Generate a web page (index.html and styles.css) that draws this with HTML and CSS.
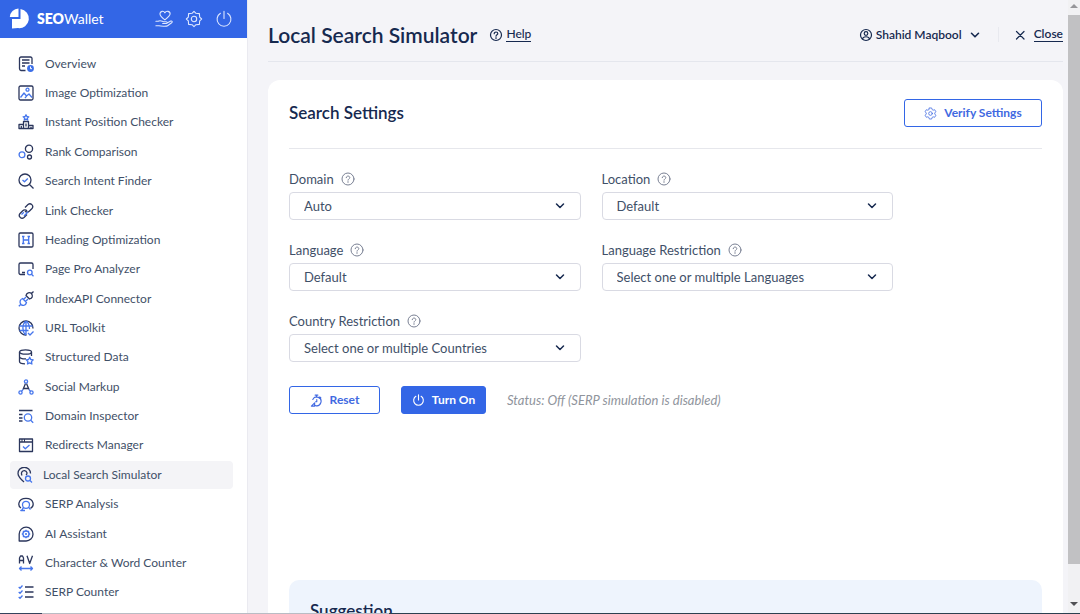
FILE: index.html
```html
<!DOCTYPE html>
<html lang="en">
<head>
<meta charset="utf-8">
<meta name="viewport" content="width=device-width, initial-scale=1">
<title>SEOWallet - Local Search Simulator</title>
<link rel="stylesheet" href="styles.css">
</head>
<body>
<div class="app">
  <aside class="sidebar">
    <header class="brand-bar">
      <a class="brand" href="#">
        <svg class="brand-logo" viewBox="0 0 22 22"><path fill="#fff" d="M9.500 0.500V9H0.800A9 9 0 0 1 9.500 0.500Z"/><path fill="#fff" d="M11.500 1A9.600 9.600 0 1 1 9 20.100L3 20.500V11H11.500Z"/></svg>
        <span class="brand-name"><b>SEO</b>Wallet</span>
      </a>
      <div class="brand-actions">
        <button class="bar-button" type="button" aria-label="Donate"><svg viewBox="0 0 20 20" class="line"><path d="M11 11C8 8.800 5.500 6.700 5.500 4.300 5.500 1 9.800.500 11 3.200 12.200.500 16.800 1 16.800 4.300 16.800 6.700 14 8.800 11 11Z"/><path d="M1 12.500H3.500C6 10.800 8 12.700 9.500 13H12.500C14 13.200 13.800 15 12.500 15H8.500M13.500 14.500 17.500 12.300C19 11.800 19.700 13.200 18.500 14.200L14 17.500C13 18.300 6 18 4.500 17.500H1"/></svg></button>
        <button class="bar-button" type="button" aria-label="Settings"><svg viewBox="0 0 20 20" class="line"><path d="m10 1.500 2.200 2.200 3.800.3.300 3.800L18.500 10l-2.200 2.200-.3 3.800-3.800.3L10 18.500l-2.200-2.200-3.800-.3-.3-3.800L1.500 10l2.200-2.200L4 4l3.800-.3Z"/><circle cx="10" cy="10" r="3"/></svg></button>
        <button class="bar-button" type="button" aria-label="Power"><svg viewBox="0 0 20 20" class="line"><path d="M10 1.500v8M6 3.700a7.700 7.700 0 1 0 8 0"/></svg></button>
      </div>
    </header>
    <nav class="menu" aria-label="Tools">
      <a class="menu-item" href="#"><svg viewBox="0 0 16 16"><path d="M7.500 14.500H3a2 2 0 0 1-1.500-2V2.500A1.500 1.500 0 0 1 3 1h9.500A1.500 1.500 0 0 1 14 2.500V8M4 4h7.500M4 7h7.500M4 10h3"/><circle class="solid" cx="12.500" cy="12.500" r="3.400"/><path class="knock" d="M12.500 10.500v2.200H14"/></svg>Overview</a>
      <a class="menu-item" href="#"><svg viewBox="0 0 16 16"><rect x="1" y="1" width="14" height="14" rx="1.500"/><g class="accent"><circle cx="9.500" cy="4.700" r="1.500"/><path d="M2.500 12.500 6 8l2.500 3L11 9l3 3.500M7 13l1.500-2"/></g></svg>Image Optimization</a>
      <a class="menu-item" href="#"><svg viewBox="0 0 16 16"><path d="M5.500 14.500V7.500h5v7M5.500 10.500H1v4h14v-3h-4.500M8 9.500v3M3.300 12v2M13 13v1"/><path class="accent" d="m8 .8.900 1.700 1.900.3-1.400 1.300.3 1.900L8 5.100 6.300 6l.3-1.900-1.400-1.300 1.900-.3Z"/></svg>Instant Position Checker</a>
      <a class="menu-item" href="#"><svg viewBox="0 0 16 16"><circle cx="11" cy="4.800" r="3.600"/><circle cx="11.500" cy="13" r="2"/><circle class="accent" cx="4" cy="10.800" r="2.900"/></svg>Rank Comparison</a>
      <a class="menu-item" href="#"><svg viewBox="0 0 16 16"><circle cx="7" cy="7" r="6"/><path d="m11.500 11.500 4 4"/><path class="accent" d="m4.500 7 2 1.800L9.800 5.500"/></svg>Search Intent Finder</a>
      <a class="menu-item" href="#"><svg viewBox="0 0 16 16"><path d="m7 4.500 3-3c2.700-2.200 6.200 1.300 4 4L11.500 8C10 9.500 8 9.300 7 8"/><path d="m9 11.500-3 3c-2.700 2.200-6.200-1.300-4-4L4.500 8C6 6.500 8 6.700 9 8"/><path class="accent" d="m3.500 11.500 2.300-2.300M6 13l4-4"/></svg>Link Checker</a>
      <a class="menu-item" href="#"><svg viewBox="0 0 16 16"><rect x="1" y="1" width="14" height="14" rx="1.200"/><path class="accent" d="M4 4.500h2.500M4 11.500h2.500M9.500 4.500H12M9.500 11.500H12M5.300 4.500v7M10.700 4.500v7M5.300 8h5.400"/></svg>Heading Optimization</a>
      <a class="menu-item" href="#"><svg viewBox="0 0 16 16"><path d="M7 13.500H2.500A1.500 1.500 0 0 1 1 12V3.500A1.500 1.500 0 0 1 2.500 2h11A1.500 1.500 0 0 1 15 3.500V8M4 11.500h3"/><g class="accent"><circle cx="11.800" cy="11.500" r="2.300"/><path d="m13.500 13.200 2 2"/></g></svg>Page Pro Analyzer</a>
      <a class="menu-item" href="#"><svg viewBox="0 0 16 16"><path d="M8 4.500 11.500 8c2.800-.8 3.800-3 2-5.400C11.500.800 8.800 1.700 8 4.500ZM13.500 2.500l2-2"/><path class="accent" d="M4.500 7.500 8.500 11.500C7.700 14.500 5 15.200 3 13.400 1.200 11.300 2 8.500 4.500 7.500ZM2.700 13.500.8 15.300M5.500 8.500 8 6M7.500 10.500 10 8"/></svg>IndexAPI Connector</a>
      <a class="menu-item" href="#"><svg viewBox="0 0 16 16"><path d="M8.500 15A7 7 0 1 1 15 8.500"/><g class="accent"><path d="M1.500 6h13M1.500 10.500h9M8 1v14M7.500 1C4 5 4 11 7.500 15M8.500 1c2.500 2.500 3 5 3 8M10 13l2 2 3.500-3.500"/></g></svg>URL Toolkit</a>
      <a class="menu-item" href="#"><svg viewBox="0 0 16 16"><ellipse cx="7.500" cy="3" rx="6" ry="2.200"/><path d="M1.500 3v9.500c0 1.500 2.500 2.300 5.500 2.300M13.500 3v4M1.500 7.500c0 1.500 2.500 2.500 6.500 2.300"/><path class="accent" d="m11.700 8.300 1.100 2.200 2.400.4-1.700 1.700.4 2.400-2.200-1.100-2.200 1.100.4-2.400-1.700-1.700 2.400-.4Z"/></svg>Structured Data</a>
      <a class="menu-item" href="#"><svg viewBox="0 0 16 16"><path d="M7.500 4.500 5 10.500M8.500 4.500l2.500 6M5.500 9.500h5"/><g class="accent"><circle cx="8" cy="2.500" r="1.600"/><circle cx="2.500" cy="13.500" r="1.600"/><circle cx="13.500" cy="13.500" r="1.600"/><path d="m3.500 12.300 1.500-1.800M12.500 12.300 11 10.500"/></g></svg>Social Markup</a>
      <a class="menu-item" href="#"><svg viewBox="0 0 16 16"><path d="M1 2.500h13.500M1 6.500h3.500M1 10h3.500M1 13h3.500"/><g class="accent"><circle cx="10" cy="9.500" r="3.700"/><path d="m12.700 12.200 2.500 2.500"/></g></svg>Domain Inspector</a>
      <a class="menu-item" href="#"><svg viewBox="0 0 16 16"><path d="M1.500 2h13v12.500h-13ZM1.500 5h13M3.500 3.500h1M6 3.500h1"/><path class="accent" d="m5 9.500 2.300 2.300L11.500 8"/></svg>Redirects Manager</a>
      <a class="menu-item menu-item-active" href="#" aria-current="page"><svg viewBox="0 0 16 16"><path d="M7 15C3 11.500 1 9.500 1 6.500a6.200 6.200 0 0 1 12.500 0M5 8.500C3.500 5.500 5.500 3.500 7.500 3.700c2.500.3 3.200 2.800 1.500 4.300"/><g class="accent"><circle cx="11" cy="11.500" r="2.500"/><path d="m13 13.500 2 2"/></g></svg>Local Search Simulator</a>
      <a class="menu-item" href="#"><svg viewBox="0 0 16 16"><path d="M3 12C1.200 11 .6 8.500 1 6.800 2.500.800 13.500.800 15 6.800c.5 2.300-.3 4.500-2.500 5.500"/><g class="accent"><circle cx="8" cy="8.800" r="3.500"/><path d="m10.500 11.300 2 2.200M5.500 11.300C5 13 4 14 2.800 14.500H7"/></g></svg>SERP Analysis</a>
      <a class="menu-item" href="#"><svg viewBox="0 0 16 16"><path d="M1.200 15V8A6.900 6.900 0 1 1 8 15Z"/><g class="accent"><circle cx="8" cy="8" r="3"/><path d="M8 3.800v1.200M8 11v1.200M3.800 8H5M11 8h1.200M5 5l.9.900M10.100 10.100l.9.900M11 5l-.9.900M5.900 10.100 5 11"/></g><circle class="solid" cx="8" cy="8" r="1"/></svg>AI Assistant</a>
      <a class="menu-item" href="#"><svg viewBox="0 0 16 16"><path d="M1.500 8.500V3l1-2h2l1 2v5.500M1.500 5.500h4M9 .8l2.700 7.700L14.500.8"/><path class="accent" d="M1.500 13.500h13M3.500 11.500l-2 2 2 2M12.500 11.500l2 2-2 2"/></svg>Character &amp; Word Counter</a>
      <a class="menu-item" href="#"><svg viewBox="0 0 16 16"><path d="M7 3h8.500M7 8h8.500M7 13h8.500"/><path class="accent" d="m.7 3 1.300 1.200L4.500 1.500M.7 8 2 9.200 4.500 6.500M.7 13 2 14.200 4.500 11.500"/></svg>SERP Counter</a>
    </nav>
  </aside>

  <main class="content">
    <header class="page-header">
      <h1 class="page-title">Local Search Simulator</h1>
      <a class="help-link" href="#"><svg class="line" viewBox="0 0 14 14"><circle cx="7" cy="7" r="5.500"/><path d="M5.200 5.700c0-2.300 3.600-2.200 3.600 0C8.800 6.800 7 6.900 7 8.200M7 9.600v.8"/></svg><span class="underlined">Help</span></a>
      <div class="account">
        <button class="user-button" type="button"><svg class="line" viewBox="0 0 14 14"><circle cx="7" cy="7" r="5.500"/><circle cx="7" cy="5.500" r="1.800"/><path d="M3.500 11c.5-3 6.500-3 7 0"/></svg>Shahid Maqbool<svg class="line user-chevron" viewBox="0 0 12 12"><path d="M2.500 4.300 6 7.800l3.500-3.500"/></svg></button>
        <a class="close-link" href="#"><svg class="line" viewBox="0 0 12 12"><path d="m2.500 2.500 7.500 7.500M10 2.500 2.500 10"/></svg><span class="underlined">Close</span></a>
      </div>
    </header>

    <section class="card">
      <div class="card-header">
        <h2 class="card-title">Search Settings</h2>
        <button class="button button-outline button-verify" type="button"><svg class="line" viewBox="0 0 20 20"><path d="M8.200 1.500h3.600l.7 2.500 1.500.9 2.500-.7 1.800 3.200L16.500 9.200v1.600l1.800 1.800-1.800 3.200-2.500-.7-1.500.9-.7 2.500H8.200L7.500 16 6 15.100l-2.500.7-1.800-3.200 1.800-1.800V9.200L1.700 7.400l1.800-3.200 2.500.7L7.500 4Z"/><circle cx="10" cy="10" r="2.800"/></svg>Verify Settings</button>
      </div>

      <form class="settings">
        <div class="field">
          <div class="field-label"><label for="domain">Domain</label><svg class="line hint" viewBox="0 0 14 14"><circle cx="7" cy="7" r="6"/><path d="M5.200 5.700c0-2.300 3.600-2.200 3.600 0C8.800 6.800 7 6.900 7 8.200M7 9.600v.8"/></svg></div>
          <div class="select-box"><select id="domain"><option>Auto</option></select><svg class="line chevron" viewBox="0 0 12 12"><path d="M2.500 4 6 7.500 9.500 4"/></svg></div>
        </div>
        <div class="field">
          <div class="field-label"><label for="location">Location</label><svg class="line hint" viewBox="0 0 14 14"><circle cx="7" cy="7" r="6"/><path d="M5.200 5.700c0-2.300 3.600-2.200 3.600 0C8.800 6.800 7 6.900 7 8.200M7 9.600v.8"/></svg></div>
          <div class="select-box"><select id="location"><option>Default</option></select><svg class="line chevron" viewBox="0 0 12 12"><path d="M2.500 4 6 7.500 9.500 4"/></svg></div>
        </div>
        <div class="field">
          <div class="field-label"><label for="language">Language</label><svg class="line hint" viewBox="0 0 14 14"><circle cx="7" cy="7" r="6"/><path d="M5.200 5.700c0-2.300 3.600-2.200 3.600 0C8.800 6.800 7 6.900 7 8.200M7 9.600v.8"/></svg></div>
          <div class="select-box"><select id="language"><option>Default</option></select><svg class="line chevron" viewBox="0 0 12 12"><path d="M2.500 4 6 7.500 9.500 4"/></svg></div>
        </div>
        <div class="field">
          <div class="field-label"><label for="language-restriction">Language Restriction</label><svg class="line hint" viewBox="0 0 14 14"><circle cx="7" cy="7" r="6"/><path d="M5.200 5.700c0-2.300 3.600-2.200 3.600 0C8.800 6.800 7 6.900 7 8.200M7 9.600v.8"/></svg></div>
          <div class="select-box"><select id="language-restriction"><option>Select one or multiple Languages</option></select><svg class="line chevron" viewBox="0 0 12 12"><path d="M2.500 4 6 7.500 9.500 4"/></svg></div>
        </div>
        <div class="field">
          <div class="field-label"><label for="country-restriction">Country Restriction</label><svg class="line hint" viewBox="0 0 14 14"><circle cx="7" cy="7" r="6"/><path d="M5.200 5.700c0-2.300 3.600-2.200 3.600 0C8.800 6.800 7 6.900 7 8.200M7 9.600v.8"/></svg></div>
          <div class="select-box"><select id="country-restriction"><option>Select one or multiple Countries</option></select><svg class="line chevron" viewBox="0 0 12 12"><path d="M2.500 4 6 7.500 9.500 4"/></svg></div>
        </div>
      </form>

      <div class="actions">
        <button class="button button-outline" type="button"><svg class="line" viewBox="0 0 14 14"><path d="M3 5.800a4.700 4.700 0 1 1 3 6.700M1.500 13H5V9.500M1.500 13 5 9.500M5.500 1.200h3M7 1.200v2.300M7.300 6v2.300H6M10.500 3l1.200 1.200"/></svg>Reset</button>
        <button class="button button-solid" type="button"><svg class="line" viewBox="0 0 14 14"><path d="M7 1v5.500M4.200 2.500a5.200 5.200 0 1 0 5.600 0"/></svg>Turn On</button>
        <span class="status">Status: Off (SERP simulation is disabled)</span>
      </div>

      <section class="suggestion">
        <h3 class="suggestion-title">Suggestion</h3>
      </section>
    </section>
  </main>

  <div class="scrollbar" aria-hidden="true">
    <span class="scroll-arrow scroll-up"></span>
    <span class="scroll-thumb"></span>
    <span class="scroll-arrow scroll-down"></span>
  </div>
</div>
<div class="taskbar-edge"></div>
</body>
</html>
```
FILE: styles.css
```css
:root {
  --navy: #16294f;
  --text: #3f5068;
  --blue: #3366e6;
  --page: #f4f4f8;
}

* {
  box-sizing: border-box;
}

body {
  margin: 0;
  height: 100vh;
  display: flex;
  flex-direction: column;
  overflow: hidden;
  background: var(--page);
  color: var(--text);
  font: 13px/16px Lato, "Noto Sans", sans-serif;
}

h1, h2, h3 {
  margin: 0;
  color: var(--navy);
  font-weight: 600;
}

a {
  color: inherit;
  text-decoration: none;
}

button, select {
  font: inherit;
  color: inherit;
}

svg {
  flex: none;
}

.line {
  fill: none;
  stroke: currentColor;
  stroke-width: 1.2;
  stroke-linecap: round;
  stroke-linejoin: round;
}

.app {
  flex: 1;
  min-height: 0;
  display: flex;
}

/* Sidebar */
.sidebar {
  width: 248px;
  flex: none;
  display: flex;
  flex-direction: column;
  background: #fff;
  border-right: 1px solid #eaeaf0;
}

.brand-bar {
  height: 38px;
  flex: none;
  display: flex;
  align-items: center;
  justify-content: space-between;
  padding: 0 13px 0 9px;
  background: var(--blue);
  color: #fff;
}

.brand {
  display: flex;
  align-items: center;
  gap: 6px;
  font-size: 14px;
}

.brand-name b {
  font-weight: 800;
}

.brand-logo {
  width: 22px;
  height: 22px;
}

.brand-actions {
  display: flex;
  gap: 10px;
}

.bar-button {
  display: grid;
  place-items: center;
  width: 20px;
  height: 20px;
  padding: 0;
  border: 0;
  background: none;
  color: #dfe8ff;
}

.bar-button svg {
  width: 18px;
  height: 18px;
}

.menu {
  flex: 1;
  display: grid;
  grid-auto-rows: 1fr;
  padding: 11px 14px 6px 10px;
  font-size: 12px;
}

.menu-item {
  display: flex;
  align-items: center;
  gap: 11px;
  margin: 1px 0;
  padding-left: 8px;
  border-radius: 4px;
}

.menu-item-active {
  padding-left: 7px;
  gap: 10px;
  background: #f4f4f7;
}

.menu-item svg {
  width: 16px;
  height: 16px;
  fill: none;
  stroke: #2b365c;
  stroke-width: 1.3;
  stroke-linejoin: round;
}

.menu-item .accent {
  stroke: #4676ec;
}

.menu-item .solid {
  fill: #3c6fe8;
  stroke: none;
}

.menu-item .knock {
  stroke: #fff;
  stroke-width: 1;
}

/* Main area */
.content {
  flex: 1;
  min-width: 0;
  overflow: hidden;
  display: flex;
  flex-direction: column;
  gap: 18px;
  padding: 8px 5px 0 20px;
}

.page-header {
  height: 54px;
  flex: none;
  display: flex;
  align-items: center;
  border-bottom: 1px solid #e4e6ed;
  color: var(--navy);
}

.page-title {
  font-size: 21px;
  line-height: 24px;
}

.help-link, .user-button, .close-link {
  display: flex;
  align-items: center;
  font-size: 12px;
  font-weight: 500;
}

.help-link {
  margin-left: 12px;
  gap: 3px;
}

.help-link svg, .user-button svg {
  width: 14px;
  height: 14px;
}

.underlined {
  line-height: 14px;
  border-bottom: 1px solid currentColor;
}

.account {
  margin-left: auto;
  display: flex;
  align-items: center;
  gap: 17px;
}

.user-button {
  gap: 3px;
  padding: 0;
  border: 0;
  background: none;
  font-weight: 600;
}

.user-button .user-chevron {
  width: 12px;
  height: 12px;
  margin-left: 4px;
  stroke-width: 1.6;
}

.close-link {
  gap: 8px;
  padding-left: 15px;
  border-left: 1px solid #e8e9ef;
  font-weight: 600;
}

.close-link svg {
  width: 12px;
  height: 12px;
}

.card {
  flex: 1 0 auto;
  padding: 19px 21px 0;
  border-radius: 12px 12px 0 0;
  background: #fff;
}

.card-header {
  display: flex;
  align-items: center;
  justify-content: space-between;
  padding-bottom: 21px;
  border-bottom: 1px solid #e6e7ec;
}

.card-title {
  font-size: 17px;
  line-height: 24px;
}

.button {
  height: 28px;
  display: flex;
  align-items: center;
  justify-content: center;
  gap: 7px;
  min-width: 85px;
  border: 1px solid var(--blue);
  border-radius: 3px;
  font-size: 12px;
  font-weight: 700;
}

.button svg {
  width: 13px;
  height: 13px;
}

.button-outline {
  min-width: 91px;
  background: #fff;
  color: #4169e1;
}

.button-verify {
  min-width: 138px;
}

.button-solid {
  background: var(--blue);
  color: #fff;
}

.settings {
  max-width: 604px;
  display: grid;
  grid-template-columns: 1fr 1fr;
  gap: 22px 21px;
  padding-top: 22px;
}

.field {
  display: grid;
  gap: 5px;
}

.field-label {
  display: flex;
  align-items: center;
  gap: 7px;
}

.hint {
  width: 14px;
  height: 14px;
  stroke: #7a8194;
  stroke-width: 1;
}

.select-box {
  position: relative;
}

.select-box select {
  display: block;
  width: 100%;
  height: 28px;
  padding: 0 32px 0 14px;
  appearance: none;
  background: #fff;
  border: 1px solid #d9dae3;
  border-radius: 4px;
}

.chevron {
  position: absolute;
  top: 8px;
  right: 15px;
  width: 12px;
  height: 12px;
  color: var(--navy);
  stroke-width: 1.5;
  pointer-events: none;
}

.actions {
  display: flex;
  align-items: center;
  gap: 21px;
  padding-top: 24px;
}

.status {
  color: #8f949c;
  font-style: italic;
}

.suggestion {
  height: 120px;
  margin-top: 166px;
  padding: 20px 21px;
  border-radius: 10px;
  background: #eef4fd;
}

.suggestion-title {
  font-size: 17px;
  line-height: 22px;
}

/* Scroll bar */
.scrollbar {
  width: 12px;
  flex: none;
  display: grid;
  grid-template-rows: 15px 1fr 49px;
  background: #f1f1f3;
}

.scroll-thumb {
  background: #c1c1c3;
}

.scroll-arrow {
  justify-self: center;
  border: 4px solid transparent;
}

.scroll-up {
  align-self: center;
  margin-bottom: 4px;
  border-top: 0;
  border-bottom-color: #96969a;
}

.scroll-down {
  align-self: end;
  margin-bottom: 7px;
  border-bottom: 0;
  border-top-color: #505054;
}

.taskbar-edge {
  height: 1px;
  flex: none;
  background: linear-gradient(90deg, #34435c 42px, #b9bcc4 42px 36%, #2b4050 36%);
}
```
